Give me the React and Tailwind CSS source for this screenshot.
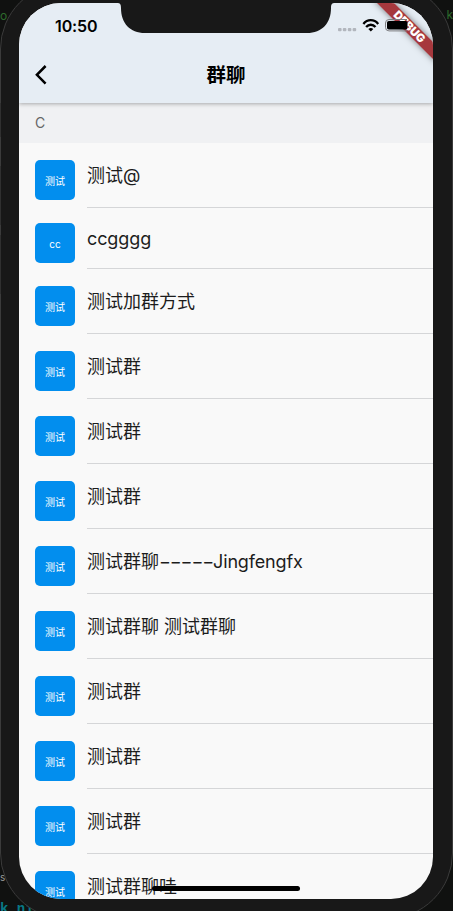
const rows = [
  { tag: "测试", name: "测试@" },
  { tag: "cc", name: "ccgggg", latin: true },
  { tag: "测试", name: "测试加群方式" },
  { tag: "测试", name: "测试群" },
  { tag: "测试", name: "测试群" },
  { tag: "测试", name: "测试群" },
  { tag: "测试", name: "测试群聊", dashes: "−−−−−", tail: "Jingfengfx" },
  { tag: "测试", name: "测试群聊 测试群聊" },
  { tag: "测试", name: "测试群" },
  { tag: "测试", name: "测试群" },
  { tag: "测试", name: "测试群" },
  { tag: "测试", name: "测试群聊哇" },
];

function Row({ row }) {
  return (
    <li className={`flex shrink-0 gap-3 pl-4 ${row.latin ? "h-[61px]" : "h-[65px]"}`}>
      <div className={row.latin ? "pt-[15.4px]" : "pt-[17.4px]"}>
        <div className="flex size-10 items-center justify-center rounded-[5px] bg-[#028eee] pt-[2px] text-[10px] leading-none text-white">
          {row.tag}
        </div>
      </div>
      <div className={`min-w-0 flex-1 whitespace-pre border-b border-[#d5d6d8] text-[18px] leading-[26px] text-[#1c1c1c] ${row.latin ? "pt-[18px] tracking-[-0.1px]" : "pt-[20px]"}`}>
        {row.name}
        {row.dashes && <span className="tracking-[-1.1px]">{row.dashes}</span>}
        {row.tail && <span className="tracking-[-0.15px]">{row.tail}</span>}
      </div>
    </li>
  );
}

function StatusBar() {
  return (
    <div className="flex h-[44px] items-start justify-between pl-[36px]">
      <span className="pt-[13px] text-[16px] font-semibold leading-5 tracking-[-0.1px] text-black">10:50</span>
      <svg width="95" height="44" viewBox="0 0 95 44" className="shrink-0">
        <g fill="#b2b6bd">
          <rect x="0" y="25" width="3.6" height="3.2" rx="1" />
          <rect x="4.8" y="25" width="3.6" height="3.2" rx="1" />
          <rect x="9.8" y="25" width="3.6" height="3.2" rx="1" />
          <rect x="14.6" y="25" width="3.6" height="3.2" rx="1" />
        </g>
        <g transform="translate(24.7 16)" fill="none" stroke="#000" strokeWidth="2.4">
          <path d="M.7 4.9C4.8-.1 11.4-.1 15.5 4.9" />
          <path d="M3.4 8C6.2 4.9 10 4.9 12.8 8" />
          <path d="M5.6 9.9Q8.1 8.1 10.6 9.9L8.1 12.6Z" fill="#000" stroke="none" />
        </g>
      </svg>
    </div>
  );
}

function DebugRibbon() {
  return (
    <svg className="absolute right-0 top-0 z-20" width="80" height="80" viewBox="0 0 80 80">
      <defs>
        <filter id="ribbonShadow" x="-30%" y="-30%" width="160%" height="160%">
          <feDropShadow dx="0" dy="0" stdDeviation="3" floodColor="#000" floodOpacity=".5" />
        </filter>
      </defs>
      <path d="M20-4L84 60V43L37-4Z" fill="#a6383e" filter="url(#ribbonShadow)" />
      <text x="56.5" y="23.7" transform="rotate(45 56.5 23.7)" textAnchor="middle" dominantBaseline="central" fontSize="11.4" fontWeight="900" fill="#fff">DEBUG</text>
      <path d="M54 16.5H36Q32.5 16.5 32.5 20V24.4Q32.5 27.9 36 27.9H54" fill="none" stroke="#7d7d80" />
      <rect x="34" y="18" width="20.5" height="8.5" rx="1.8" fill="#000" />
    </svg>
  );
}

export default function App() {
  return (
    <div className="relative flex h-[911px] w-[453px] items-start overflow-hidden bg-[#101110] font-['Inter','Noto_Sans_CJK_SC',sans-serif]">
      <div className="absolute left-0 top-[6px] text-[12px] leading-5 text-[#2d6a2c]">o</div>
      <div className="absolute right-0 top-[5px] text-[12px] leading-5 text-[#2d6a2c]">k</div>
      <div className="absolute left-0 top-[867px] text-[10px] leading-5 text-[#999999]">s</div>
      <div className="absolute bottom-[-8px] left-0 whitespace-pre font-['Liberation_Mono',monospace] text-[14px] font-bold leading-5 text-[#087886]">k ni</div>
      <div className="relative -mt-[17px] flex h-[936px] w-[453px] shrink-0 rounded-[66px] border border-[#3b3b3b] bg-[#181818] px-[18px] pt-[19px]">
        <div className="relative flex h-[896px] w-[414px] shrink-0 flex-col overflow-hidden rounded-[42px] bg-[#f9f9f9]">
          <header className="relative z-10 h-[100px] shrink-0 bg-[#e6edf4] shadow-[0_1px_4px_rgba(0,0,0,0.3)]">
            <StatusBar />
            <div className="grid h-[56px] grid-cols-[60px_1fr_60px] items-center">
              <svg width="12" height="20" viewBox="0 0 12 20" className="ml-4" fill="none" stroke="#000" strokeWidth="2.5">
                <path d="M10.6 1L1.9 9.8L10.6 18.6" />
              </svg>
              <h1 className="text-center text-[19.5px] font-semibold leading-6 text-black">群聊</h1>
            </div>
          </header>
          <div className="flex h-10 shrink-0 items-center bg-[#f0f1f3] pb-[2px] pl-4 text-[14px] text-[#666666]">C</div>
          <ul className="flex flex-col">
            {rows.map((row, i) => <Row key={i} row={row} />)}
          </ul>
          <DebugRibbon />
          <svg className="absolute inset-x-0 top-0 z-20 mx-auto" width="218" height="31" viewBox="0 0 218 31" fill="#181818">
            <path d="M0 0C3 0 4 1 4 5C4 20 13 30 28 30H190C205 30 214 20 214 5C214 1 215 0 218 0Z" />
          </svg>
          <div className="absolute inset-x-0 bottom-2 z-20 mx-auto h-[5px] w-[148px] rounded-full bg-black" />
        </div>
      </div>
      <div className="absolute left-0 top-[103px] flex w-px flex-col">
        <div className="h-[34px] bg-[#303030]" />
        <div className="mt-[29px] h-[59px] bg-[#303030]" />
        <div className="mt-[10px] h-[59px] bg-[#303030]" />
      </div>
    </div>
  );
}
